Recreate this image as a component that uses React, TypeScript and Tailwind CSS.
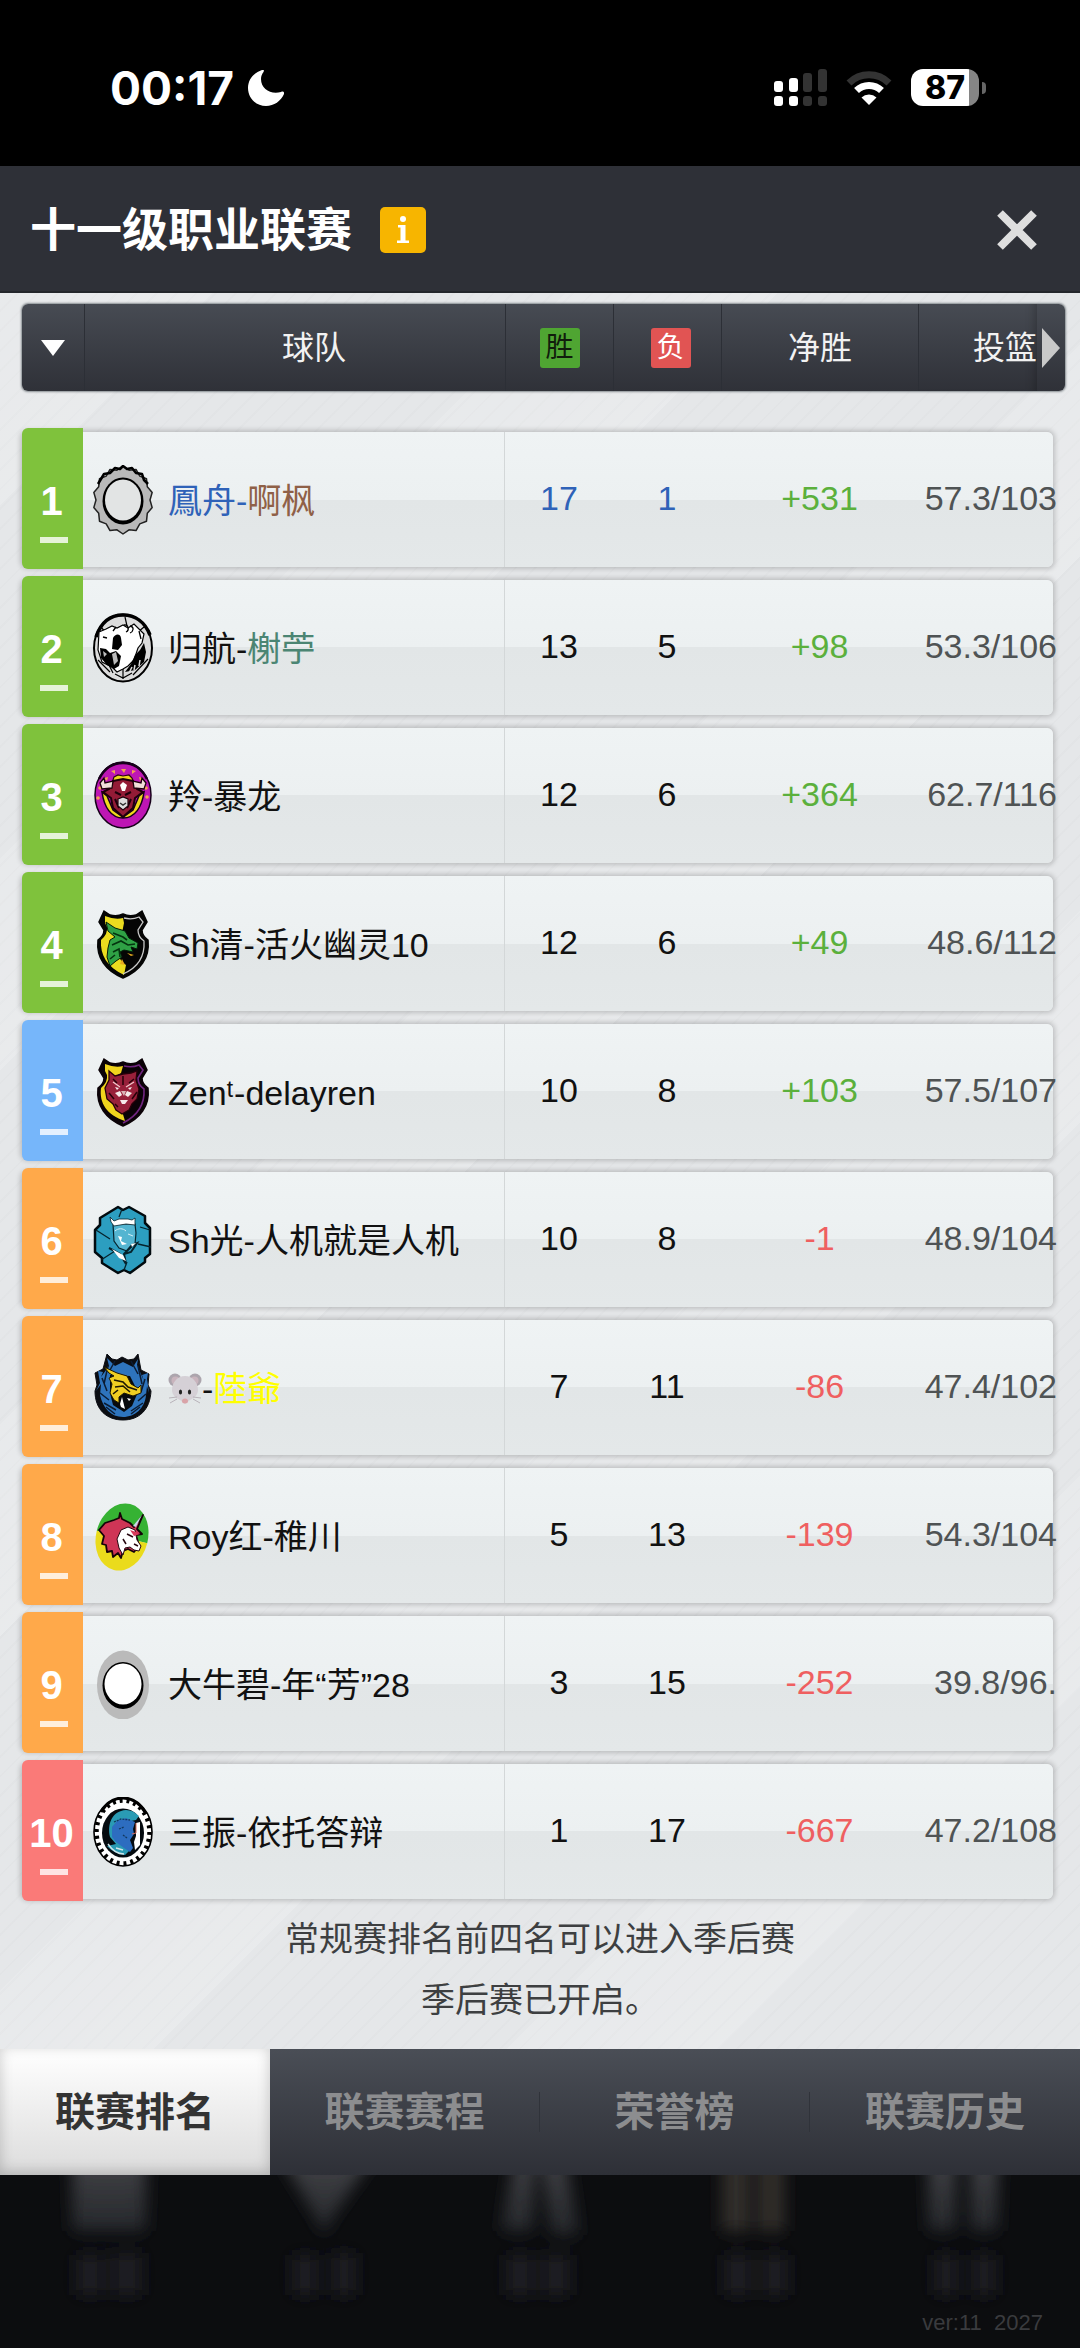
import type { ReactNode } from 'react'

interface Team {
  rank: number
  badge: string
  logo: ReactNode
  name: ReactNode
  wins: number
  losses: number
  diff: string
  shooting: string
  highlight?: boolean
}

function Gear() {
  const points = Array.from({ length: 28 }, (_, i) => {
    const a = (i * Math.PI) / 14
    const r = i % 2 === 0 ? 1 : 0.9
    return `${(30 + Math.sin(a) * 30 * r).toFixed(1)},${(35 - Math.cos(a) * 34 * r).toFixed(1)}`
  }).join(' ')
  return (
    <>
      <polygon points={points} fill="#b9b9b9" stroke="#222" strokeWidth="1.5" strokeLinejoin="round" />
      <path d="M5 19L8 14 11 9 17 8 22 3 27 4 30 1 34 4 39 3 43 8 49 9 51 15 55 19" fill="none" stroke="#000" strokeWidth="2.5" strokeLinejoin="round" />
      <ellipse cx="30" cy="36" rx="20.5" ry="23.5" fill="#000" />
      <ellipse cx="30" cy="35" rx="18" ry="20.5" fill="#e2e4e4" />
    </>
  )
}

function Skull() {
  return (
    <>
      <ellipse cx="30" cy="35" rx="29" ry="33.5" fill="#dcdcdc" stroke="#000" strokeWidth="2" />
      <path d="M3 24C8 9 18 2 30 2s22 7 27 20" fill="none" stroke="#000" strokeWidth="3.5" />
      <path d="M32 4l2 9M8 14l5 6M51 14l-6 5M5 47l12 12M10 40l10 20M55 46L40 62M22 61l8 4 9-5M30 56v10" fill="none" stroke="#000" strokeWidth="1.2" />
      <path d="M6 19l7-3 6-3 5 2 6-3 5 3 6-4 10 10-2 9-4 5-4 12-6 6-5 3-6 3-5-5-10-5-4-12z" fill="#fff" stroke="#000" strokeWidth="1.2" />
      <path d="M20 25c2-4 7-5 8 0l1 7-4 5-6-1zM7 35l6 1 4 4 6-2 5 5-2 10-5 3-7-4-6-7z" fill="#000" />
      <path d="M19 41l4-2 2 9-4 4zM10 38l4 3-3 3z" fill="#bbb" />
      <path d="M51 30l2 9-2 10-9 8-10 2 6-8 4-9 5-5z" fill="#000" />
      <path d="M31 12c4-1 6 5 2 7M37 13c5 1 3 6 0 7M23 14l-3 4M46 18l2 8M10 24l4 1" fill="none" stroke="#000" strokeWidth="1.3" />
      <path d="M36 60l3-6M41 57l1-5M46 53l1-6" stroke="#ddd" strokeWidth="1.5" />
    </>
  )
}

function Bull() {
  return (
    <>
      <ellipse cx="30" cy="34" rx="28" ry="33" fill="#be16b4" stroke="#17001a" strokeWidth="1.5" />
      <path d="M6 18C12 6 20 2 30 2s18 4 24 16" fill="none" stroke="#17001a" strokeWidth="2.5" />
      <path d="M9 31c2 15 9 26 21 26s19-11 21-26l-5 4-6 14-10 7-10-7-6-14z" fill="#f0d91c" stroke="#17001a" strokeWidth="1.5" />
      <g fill="#f4a052">
        <path d="M28 8h5l-2 4zM18 10l4-1v4zM39 9l4 1-4 3zM11 17l4-1-1 4zM46 16l4 1-3 3z" />
        <circle cx="7" cy="27" r="1.8" /><circle cx="53" cy="27" r="1.8" /><circle cx="5" cy="37" r="1.8" /><circle cx="54" cy="36" r="1.8" />
      </g>
      <path d="M21 16l4-2 5 1 6-1 3 3 3 7-24 1z" fill="#f0d91c" stroke="#2b0010" strokeWidth="1.2" />
      <path d="M20 20l10-2 10 2 4 8 6 3-8 6-2 10-10 9-10-9-2-10-8-6 6-3z" fill="#931b36" stroke="#1d000b" strokeWidth="2" />
      <path d="M19 27L9 28l-2-6 4-5 1 5 8-2zM41 27l10 1 2-6-4-5-1 5-8-2z" fill="#f2dfd9" stroke="#1d000b" strokeWidth="1.3" />
      <path d="M27 24l3-3 4 3-2 6h-3z" fill="#fff" />
      <path d="M22 31l6 3M38 31l-6 3M22 38l4 9M38 38l-4 9" stroke="#1d000b" strokeWidth="2" />
      <path d="M25 38l5-2 5 2v7l-5 4-5-4z" fill="#ddd" stroke="#1d000b" strokeWidth="1.2" />
      <path d="M27 42l3 2 3-2" fill="none" stroke="#333" strokeWidth="1.5" />
    </>
  )
}

const shield = 'M11 2l6 4q7 2 13-1 6 3 13 1l6-4 5 11-5 8q0 6 6 10c2 18-8 31-25 38C13 62 3 49 5 31q6-4 6-10l-5-8z'

function DragonShield() {
  return (
    <>
      <path d={shield} fill="#050505" stroke="#050505" strokeWidth="1.5" />
      <path d="M12 7q10 4 18 2l1 5-2 10-7 8 2 13 5 8 4 3-2 10C14 58 7 46 8 31q7-6 6-13l-2-4z" fill="#ebdc1f" />
      <path d="M31 9q8 2 15-1l4 5-5 8q0 7 6 11c1 16-7 27-21 33" fill="none" stroke="#c9c9c9" strokeWidth="1.3" />
      <path d="M13 13l9 6 10 3 4 7 9 5-1 6-6-2 2 5-9-2-4 2 2 5-6 4-6 5-3-9 1-9 2-8 5-3-7-6z" fill="#2fa145" stroke="#031c08" strokeWidth="1" />
      <path d="M20 24l10 4 4 3M19 36l9-4 7 4 7-1M20 43l6-3 1 8M17 50l5-4" fill="none" stroke="#04330f" strokeWidth="1.6" />
      <path d="M27 55l2-5 3 6zM34 44l7 2-3 1z" fill="#e6a91f" />
    </>
  )
}

function LionShield() {
  return (
    <>
      <path d={shield} fill="#0b0207" stroke="#0b0207" strokeWidth="1.5" />
      <path d="M12 7q10 4 18 2l-2 7-9 5-3 13 4 14 9 6 3 10C14 58 6 46 8 31q7-6 6-13l-2-4z" fill="#f0d41d" />
      <path d="M31 9q8 2 15-1l4 5-5 8q0 7 6 11c1 16-7 27-21 34" fill="none" stroke="#70257f" strokeWidth="1.6" />
      <path d="M16 14l6 5 8-2 8-1 6-2-1 9 3 9-2 10-5 5-3 6-7 4-6-4-3-6-6-5-2-11 4-8z" fill="#98203a" stroke="#260009" strokeWidth="1.3" />
      <path d="M20 22l4 4M41 22l-5 4M30 19v9M16 36l5 6M44 35l-5 7M22 47l3 3" fill="none" stroke="#260009" strokeWidth="1.5" />
      <path d="M20 25l7 5M41 25l-8 5" stroke="#f1c9cc" strokeWidth="1.3" />
      <path d="M22 30l4 1-2 2zM39 30l-4 1 2 2zM22 36l5-2 2 4-3 2zM39 36l-5-2-2 4 3 2zM27 43h8l-3 4h-3z" fill="#f5eaea" />
      <path d="M28 34h5l-2 5z" fill="#d9b3b6" />
    </>
  )
}

function Knight() {
  return (
    <>
      <path d="M25 2l5 3 6-3 16 9v7l5 5v26l-5 4v4L37 68l-6-3-6 3L9 58v-5l-7-6V25l5-5v-7z" fill="#2c9ec0" stroke="#020b0f" strokeWidth="2.5" strokeLinejoin="round" />
      <path d="M29 4l-3 8M3 25l14 9M57 25l-10-3M8 55l14-9M31 65l3-8M45 39l13 3" fill="none" stroke="#06232c" strokeWidth="1.3" />
      <path d="M20 19h22l1 9-1 11-8 7-8-3-5-7z" fill="#54b5d1" stroke="#06232c" strokeWidth="1.2" />
      <path d="M17 12l4 4 5-2h9l4 1 3-2v7l-9-1-12 2-3-4z" fill="#fff" stroke="#06232c" strokeWidth=".8" />
      <path d="M16 43l11 6 6 10-2-10 8-9 5-2-6 9-7 2" fill="none" stroke="#06232c" strokeWidth="2" />
      <path d="M19 44l11 6 3 6-7-3zM25 31l4 1-1 4 6 3-5 1zM38 39l5-1-4 4z" fill="#fff" />
      <path d="M22 26c3-3 8-3 11 0M35 29l5 2" fill="none" stroke="#d8f1f8" strokeWidth="1" />
    </>
  )
}

function BlueDragon() {
  return (
    <>
      <path d="M14 1l5 5 5 1 5-3 6 3 6-1 4-5 3 16 8 4-1 11 3 6C57 57 46 67 30 67S2 57 2 38l2-6-2-12 8-4z" fill="#0b0d12" stroke="#0b0d12" strokeWidth="1" />
      <path d="M14 5l2 8-8 11 2-5-5-1 2 12-4 8 5-7-1 11c3 13 11 22 23 22s22-9 23-22l1-9 2 7-2-14 1-6-6 2 2 6-7-16 1-6-5 8-10-5-8 4z" fill="#2e74bd" />
      <path d="M15 13l-4 18M9 25l5 13M7 40l9 7M11 50l12 7M45 13l4 18M52 26l-4 13M53 41l-8 7M50 50l-12 8M22 8l-5 9M38 8l7 13M13 54l9 7M47 54l-9 7" stroke="#0b1c33" strokeWidth="1.5" />
      <path d="M17 22l20 1 8 16-6 14-8 6-11-7-3-12z" fill="#080a0d" />
      <path d="M11 14l13 6 10 3 4 8 7 4 3-3v8l-8 3-9-3-5 4v6l-5-3-4-7 2-9-3-6 5-2-5-3z" fill="#f0ce22" stroke="#1d1703" strokeWidth="1" />
      <path d="M21 27l9 2 5 5 9 3M22 34l8-1 7 6M20 41l5-4" fill="none" stroke="#1d1703" strokeWidth="1.6" />
      <path d="M27 51l2-7 3 12-4-2zM34 45l4 1-2 2z" fill="#fff" />
    </>
  )
}

function Unicorn() {
  return (
    <>
      <g transform="rotate(14 29 36)">
        <path d="M3 36a26 34 0 0 1 52 0z" fill="#36b233" />
        <path d="M3 36a26 34 0 0 0 52 0z" fill="#eadb1c" />
      </g>
      <path d="M6 29l6-7 9-3 5-2 1-5 2 6 8 4 4 4 9-12-6 14 5 5-6 1 3 11-5 6-6-3-5 2-2 7-3-5-5 4-1-6-5 1-1-7-4-1 2-8z" fill="#cf3556" stroke="#150308" strokeWidth="1.8" strokeLinejoin="round" />
      <path d="M28 29l7-3 7 3 2 10 4 6-2 5-5-1-4-3-5 1-2 7-4-7-2-9z" fill="#fff" stroke="#26070f" strokeWidth="1" />
      <path d="M40 25l9-11-6 12z" fill="#c9dce8" />
      <path d="M34 33l6 3M30 38l3 5M41 43l4 2" stroke="#26070f" strokeWidth="1.5" />
      <path d="M37 29l6 2 4 2-6 2z" fill="#d83b5b" />
    </>
  )
}

function PlainOval() {
  return (
    <>
      <ellipse cx="30" cy="36" rx="26" ry="34.5" fill="#bababa" />
      <ellipse cx="30" cy="36.5" rx="20.5" ry="23.5" fill="#000" />
      <ellipse cx="30" cy="35" rx="18.5" ry="20.5" fill="#fff" />
    </>
  )
}

function Spartan() {
  return (
    <>
      <ellipse cx="30" cy="35" rx="29" ry="34" fill="#fff" stroke="#000" strokeWidth="1.6" />
      <ellipse cx="30" cy="35" rx="26.5" ry="31.5" fill="none" stroke="#000" strokeWidth="4.5" strokeDasharray="3 4" />
      <path d="M8 15C14 5 21 1 30 1s16 4 22 14" fill="none" stroke="#000" strokeWidth="3" />
      <ellipse cx="30" cy="36" rx="21" ry="24.5" fill="#050b10" />
      <path d="M17 40c-3-13 2-26 16-27 5 0 9 2 13 6l-3 4-5 1-2 9-4 10 6 9-6 6c-8-1-13-4-18-9l9-2z" fill="#2a9bb4" />
      <path d="M19 30l5-6 9-3 9 4-2 7 1 5-4 6 3 8-3 4-6-4-8-6-4-5z" fill="#2d6dc0" />
      <path d="M21 25l7-3 9 1M26 32l5-2M30 38l4 3" fill="none" stroke="#12375e" strokeWidth="1.3" strokeDasharray="2 1" />
      <path d="M43 26l4-1v23l-5 5-1-8 2-6z" fill="#fff" />
      <path d="M43 26v10l-4 1" fill="none" stroke="#d46a5c" strokeWidth="1" />
      <path d="M15 47c4 6 9 10 16 10M23 51l7 2" fill="none" stroke="#cfe5ea" strokeWidth="1.4" />
    </>
  )
}

function Mouse() {
  return (
    <svg viewBox="0 0 34 34" className="size-[34px]" role="img" aria-label="🐭">
      <circle cx="7" cy="8" r="6.5" fill="#aca5ad" /><circle cx="27" cy="8" r="6.5" fill="#aca5ad" />
      <circle cx="7.5" cy="8.5" r="4" fill="#c9b4bd" /><circle cx="26.5" cy="8.5" r="4" fill="#c9b4bd" />
      <path d="M17 4c8 0 13 7 13 14 0 5-4 8-8 10l-5 4-5-4c-4-2-8-5-8-10C4 11 9 4 17 4z" fill="#d5d0d6" />
      <path d="M9 27l-7 4M25 27l7 4M9 25l-8 1M25 25l8 1" stroke="#b9b3ba" strokeWidth="1" />
      <ellipse cx="12.5" cy="20" rx="1.6" ry="2.6" fill="#222" /><ellipse cx="21.5" cy="20" rx="1.6" ry="2.6" fill="#222" />
      <ellipse cx="17" cy="29" rx="3" ry="2.5" fill="#d9a3a8" />
    </svg>
  )
}

const teams: Team[] = [
  {
    rank: 1, badge: 'bg-[#7fc23c]', logo: <Gear />, wins: 17, losses: 1, diff: '+531', shooting: '57.3/103', highlight: true,
    name: <><span className="text-[#2f62b8]">鳳舟-</span><span className="text-[#8f6047]">啊枫</span></>,
  },
  {
    rank: 2, badge: 'bg-[#7fc23c]', logo: <Skull />, wins: 13, losses: 5, diff: '+98', shooting: '53.3/106',
    name: <>归航-<span className="text-[#4b8573]">榭苧</span></>,
  },
  { rank: 3, badge: 'bg-[#7fc23c]', logo: <Bull />, name: '羚-暴龙', wins: 12, losses: 6, diff: '+364', shooting: '62.7/116' },
  { rank: 4, badge: 'bg-[#7fc23c]', logo: <DragonShield />, name: 'Sh清-活火幽灵10', wins: 12, losses: 6, diff: '+49', shooting: '48.6/112' },
  { rank: 5, badge: 'bg-[#76b6fa]', logo: <LionShield />, name: 'Zenᵗ-delayren', wins: 10, losses: 8, diff: '+103', shooting: '57.5/107' },
  { rank: 6, badge: 'bg-[#ffa94a]', logo: <Knight />, name: 'Sh光-人机就是人机', wins: 10, losses: 8, diff: '-1', shooting: '48.9/104' },
  {
    rank: 7, badge: 'bg-[#ffa94a]', logo: <BlueDragon />, wins: 7, losses: 11, diff: '-86', shooting: '47.4/102',
    name: <><Mouse /><span>-</span><span className="text-[#ffff00]">陸爺</span></>,
  },
  { rank: 8, badge: 'bg-[#ffa94a]', logo: <Unicorn />, name: 'Roy红-稚川', wins: 5, losses: 13, diff: '-139', shooting: '54.3/104' },
  { rank: 9, badge: 'bg-[#ffa94a]', logo: <PlainOval />, name: '大牛碧-年“芳”28', wins: 3, losses: 15, diff: '-252', shooting: '39.8/96.' },
  { rank: 10, badge: 'bg-[#fa7a78]', logo: <Spartan />, name: '三振-依托答辩', wins: 1, losses: 17, diff: '-667', shooting: '47.2/108' },
]

const tabs = ['联赛排名', '联赛赛程', '荣誉榜', '联赛历史']

function StatusBar() {
  return (
    <div className="flex h-[166px] items-center justify-between bg-black pr-[94px] pl-[110px] pt-[9px] text-white">
      <div className="flex items-center gap-[14px]">
        <span className="font-['Inter'] text-[46px] leading-none font-bold">00:17</span>
        <svg viewBox="0 0 36 36" className="size-[36px]" fill="#fff" aria-hidden="true">
          <path d="M14 0C5 3 0 10 0 18c0 10 8 18 18 18 8 0 15-5 18-12 .5-2-.8-3-3-2-10 3-20-3-20-13 0-3 1-5 2.5-7C16.5 0 15.5-.5 14 0z" />
        </svg>
      </div>
      <div className="flex items-center gap-[19px]">
        <svg viewBox="0 0 53 37" className="h-[37px] w-[53px]" aria-hidden="true">
          <g fill="#fff">
            <rect y="12" width="9" height="11" rx="3" /><rect y="27" width="9" height="10" rx="3" />
            <rect x="15" y="9" width="9" height="14" rx="3" /><rect x="15" y="27" width="9" height="10" rx="3" />
          </g>
          <g fill="#333">
            <rect x="29" y="4" width="9" height="19" rx="3" /><rect x="29" y="27" width="9" height="10" rx="3" />
            <rect x="44" width="9" height="23" rx="3" /><rect x="44" y="27" width="9" height="10" rx="3" />
          </g>
        </svg>
        <svg viewBox="0 0 46 34" className="h-[34px] w-[46px]" fill="none" aria-hidden="true">
          <path d="M3 12a28.5 28.5 0 0 1 40 0" stroke="#333" strokeWidth="7" />
          <path d="M10.500 19.500a18 18 0 0 1 25 0" stroke="#fff" strokeWidth="7" />
          <path d="M15.500 26.500a11 11 0 0 1 15 0L23 34z" fill="#fff" />
        </svg>
        <div className="flex items-center gap-[3px]">
          <div className="flex h-[37px] w-[68px] items-center justify-center rounded-[12px] bg-linear-to-r from-white from-86% to-[#858585] to-86% font-['Inter'] text-[32px] leading-none font-extrabold text-black">
            87
          </div>
          <div className="h-[12px] w-[4px] rounded-r-full bg-[#666]" />
        </div>
      </div>
    </div>
  )
}

function TeamRow({ team }: { team: Team }) {
  const record = team.highlight ? 'text-[#2f62b8]' : 'text-[#111]'
  return (
    <tr className="mr-[12px] grid h-[135px] grid-cols-[61px_minmax(0,1fr)_108px_108px_197px_135px] rounded-[6px] bg-[linear-gradient(to_bottom,#eff3f4_0%,#ecf0f1_50%,#e2e6e7_50%,#e4e8e9_100%)] text-center leading-[48px] shadow-[0_0_5px_2px_rgba(0,0,0,0.18)]">
      <td className={`-mt-1 -mb-0.5 flex flex-col items-center rounded-l-[6px] pt-[49px] pr-[2px] text-[40px] font-bold text-white ${team.badge}`}>
        {team.rank}
        <span className="mt-[12px] ml-[4px] h-[6px] w-[28px] bg-white/80" />
      </td>
      <td className="flex min-w-0 items-center gap-[15px] border-r border-[#d3d7d8] pl-[10px]">
        <svg viewBox="0 0 60 70" className="h-[70px] w-[60px] shrink-0" aria-hidden="true">{team.logo}</svg>
        <span className="flex items-center pt-[3px] whitespace-nowrap text-[#111]">{team.name}</span>
      </td>
      <td className={`pt-[42px] ${record}`}>{team.wins}</td>
      <td className={`pt-[42px] ${record}`}>{team.losses}</td>
      <td className={`pt-[42px] ${team.diff.startsWith('+') ? 'text-[#5bb03c]' : 'text-[#ef5f60]'}`}>{team.diff}</td>
      <td className="-mr-1 pt-[42px] text-right text-[#4f5354]">{team.shooting}</td>
    </tr>
  )
}

function Standings() {
  return (
    <table className="block pr-[15px] pl-[22px] text-[34px]">
      <thead className="block">
        <tr className="grid h-[87px] grid-cols-[63px_minmax(0,1fr)_108px_108px_197px_118px_28px] divide-x divide-[#2c2f36] overflow-hidden rounded-[6px] bg-linear-to-b from-[#474b53] to-[#2f3138] text-[32px] text-[#f2f2f2] shadow-[0_0_2px_1px_rgba(40,50,55,0.5)] *:flex *:items-center *:justify-center *:font-normal">
          <th>
            <button aria-label="排序">
              <svg viewBox="0 0 24 16" className="h-[16px] w-[24px]" fill="#fff" aria-hidden="true"><path d="M0 0h24L12 16z" /></svg>
            </button>
          </th>
          <th className="pl-[38px]">球队</th>
          <th>
            <span className="size-[40px] rounded-[3px] bg-[#4fa532] text-center text-[28px] leading-[40px] text-[#111d0c]">胜</span>
          </th>
          <th className="pl-[6px]">
            <span className="size-[40px] rounded-[3px] bg-[#e15453] text-center text-[28px] leading-[40px] text-white">负</span>
          </th>
          <th>净胜</th>
          <th className="justify-end! border-r-0! shadow-[inset_-10px_0_10px_-8px_rgba(0,0,0,0.25)]">投篮</th>
          <th>
            <button aria-label="下一列">
              <svg viewBox="0 0 18 40" className="h-[40px] w-[18px]" fill="#c9c9c9" aria-hidden="true"><path d="M0 0l18 20L0 40z" /></svg>
            </button>
          </th>
        </tr>
      </thead>
      <tbody className="flex flex-col gap-[13px] pt-[41px]">
        {teams.map(team => <TeamRow key={team.rank} team={team} />)}
      </tbody>
    </table>
  )
}

// 底部被遮住的主导航，只剩模糊的轮廓
function DimmedNav() {
  return (
    <div className="flex flex-col bg-[#0c0d0f]">
      <svg viewBox="0 0 1080 134" className="w-full" aria-hidden="true">
        <defs>
          <filter id="soft" x="-20%" y="-40%" width="140%" height="180%"><feGaussianBlur stdDeviation="8" /></filter>
          <linearGradient id="fade" x1="0" y1="0" x2="0" y2="1">
            <stop offset="0" stopColor="#424347" /><stop offset="1" stopColor="#24262a" />
          </linearGradient>
        </defs>
        <g filter="url(#soft)">
          <g fill="url(#fade)">
            <path d="M72-20h74v76H72zM280-20h94l-40 60-10 20-10-20zM515-20h20l-2 76h-32zM540-20h25l14 80h-28zM928-20h28v76h-28zM970-20h28v76h-28z" />
            <path d="M722-20h28v76h-28zM758-20h26v76h-26z" fill="#332f2c" />
          </g>
          <g fill="#1d1e20">
            <path d="M76 80h28v40H76zM112 78h30v42h-30zM292 80h26v40h-26zM332 78h24v42h-24zM506 80h28v40h-28zM542 80h28v40h-28zM724 80h28v40h-28zM762 80h26v40h-26zM934 80h24v40h-24zM972 80h24v40h-24z" />
          </g>
        </g>
      </svg>
      <div className="flex h-[39px] items-start justify-end pr-[37px] text-[22px] leading-[28px] whitespace-pre text-[#3a3b3e]">
        ver:11  2027
      </div>
    </div>
  )
}

export default function App() {
  return (
    <div className="flex min-h-screen flex-col bg-[#0c0d0f] font-['Liberation_Sans','Noto_Sans_CJK_SC',sans-serif]">
      <StatusBar />
      <header className="flex h-[127px] items-center border-b-2 border-[#23262b] bg-[#2e3037] pt-[2px] pr-[43px] pl-[30px]">
        <h1 className="text-[46px] leading-none font-bold text-white">十一级职业联赛</h1>
        <button aria-label="说明" className="ml-[28px] flex size-[46px] items-center justify-center rounded-[5px] bg-[#f7b500] text-white">
          <svg viewBox="0 0 14 28" className="h-[28px] w-[14px]" fill="#fff" aria-hidden="true">
            <circle cx="7" cy="3" r="3" />
            <path d="M2 9h7.500v15.500H13V27H1v-2.500h3.500v-13H2z" />
          </svg>
        </button>
        <button aria-label="关闭" className="ml-auto">
          <svg viewBox="0 0 40 40" className="size-[40px]" stroke="#dedede" strokeWidth="8" aria-hidden="true">
            <path d="M3 3l34 34M37 3L3 37" />
          </svg>
        </button>
      </header>

      <main className="flex-1 bg-[#e5e7e9] bg-[repeating-linear-gradient(135deg,rgba(255,255,255,0.12)_0px,rgba(255,255,255,0.16)_150px,transparent_150px,transparent_400px),repeating-linear-gradient(135deg,transparent_0px,transparent_12px,rgba(0,0,0,0.012)_12px,rgba(0,0,0,0.012)_14px)] pt-[11px] pb-[18px]">
        <Standings />
        <p className="mt-[10px] text-center text-[34px] leading-[61px] text-[#3d3f41]">
          常规赛排名前四名可以进入季后赛<br />季后赛已开启。
        </p>
      </main>

      <nav className="grid h-[126px] grid-cols-4 bg-linear-to-b from-[#4a4e56] to-[#2e3037] text-[40px] font-bold text-[#8c8d8f]">
        {tabs.map((tab, i) => (
          <button
            key={tab}
            aria-current={i === 0 ? 'page' : undefined}
            className={
              i === 0
                ? 'bg-linear-to-b from-white to-[#dcdcdc] text-[#333] shadow-[inset_0_-3px_14px_rgba(0,0,0,0.2)]'
                : 'flex items-center'
            }
          >
            <span className="flex-1">{tab}</span>
            {i > 0 && i < 3 && <span className="h-[40px] w-px bg-[#30333a]" />}
          </button>
        ))}
      </nav>
      <DimmedNav />
    </div>
  )
}
